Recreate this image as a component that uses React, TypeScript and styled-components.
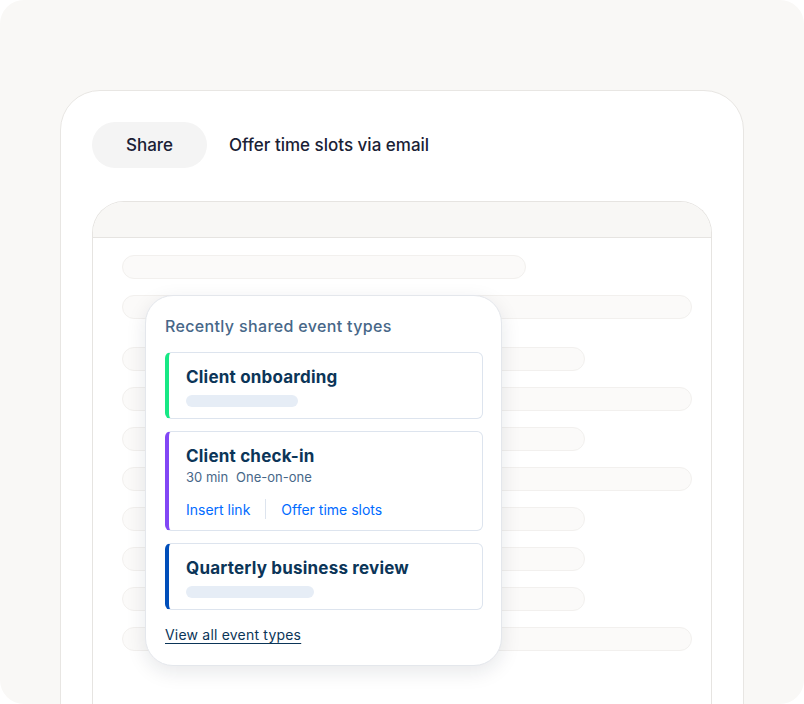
import React from "react";
import styled, { createGlobalStyle } from "styled-components";

const GlobalStyle = createGlobalStyle`
  html, body {
    margin: 0;
    padding: 0;
    background: #ffffff;
  }
  * {
    box-sizing: border-box;
  }
`;

const Page = styled.div`
  width: 804px;
  height: 704px;
  overflow: hidden;
  background: #f9f8f6;
  border-radius: 24px;
  padding: 90px 60px 0;
  font-family: Inter, "Noto Sans", sans-serif;
`;

const Card = styled.div`
  height: 640px;
  background: #ffffff;
  border: 1px solid #e8e6e3;
  border-radius: 40px 40px 0 0;
  padding: 31px 31px 0;
`;

const TopBar = styled.div`
  display: flex;
  align-items: center;
  gap: 22px;
  height: 46px;
`;

const SharePill = styled.div`
  width: 115px;
  height: 46px;
  border-radius: 23px;
  background: #f4f4f4;
  display: flex;
  align-items: center;
  justify-content: center;
  font-size: 17px;
  font-weight: 500;
  color: #1a2135;
`;

const TopLabel = styled.div`
  font-size: 17px;
  font-weight: 500;
  color: #1a2135;
`;

const Panel = styled.div`
  position: relative;
  margin-top: 33px;
  height: 520px;
  border: 1px solid #e6e4e1;
  border-bottom: none;
  border-radius: 32px 32px 0 0;
  overflow: hidden;
`;

const PanelHeader = styled.div`
  height: 36px;
  background: #f8f7f5;
  border-bottom: 1px solid #e6e4e1;
`;

const PanelBody = styled.div`
  padding: 17px 19px 0 29px;
  display: flex;
  flex-direction: column;
`;

const Skeleton = styled.div<{ $width: number; $gap: number }>`
  width: ${p => p.$width}px;
  height: 24px;
  margin-top: ${p => p.$gap}px;
  border-radius: 12px;
  background: #fbfaf9;
  border: 1px solid #f2f0ee;
`;

const Popup = styled.div`
  position: absolute;
  left: 52px;
  top: 93px;
  width: 357px;
  height: 371px;
  background: #ffffff;
  border: 1px solid #e4e7ec;
  border-radius: 28px;
  box-shadow: 0 6px 20px rgba(20, 30, 50, 0.1);
  padding: 20px 18px 0 19px;
  font-family: Inter, "Noto Sans", sans-serif;
`;

const PopupTitle = styled.div`
  font-size: 16px;
  line-height: 20px;
  font-weight: 500;
  letter-spacing: 0.35px;
  color: #476788;
`;

const EventList = styled.div`
  margin-top: 16px;
  display: flex;
  flex-direction: column;
  gap: 12px;
`;

const EventItem = styled.div<{ $accent: string }>`
  border: 1px solid #dde4ee;
  border-left: 4px solid ${p => p.$accent};
  border-radius: 6px;
  padding: 13px 16px 11px 17px;
`;

const EventName = styled.div`
  font-size: 17px;
  line-height: 22px;
  font-weight: 700;
  letter-spacing: 0.2px;
  color: #0b3558;
`;

const EventMeta = styled.div`
  margin-top: 1px;
  font-size: 13px;
  line-height: 18px;
  color: #476788;
  display: flex;
  gap: 8px;
`;

const TextPill = styled.div<{ $width: number }>`
  margin-top: 7px;
  width: ${p => p.$width}px;
  height: 12px;
  border-radius: 6px;
  background: #e6edf6;
`;

const Actions = styled.div`
  margin-top: 13px;
  display: flex;
  align-items: center;
  height: 20px;
`;

const ActionLink = styled.a`
  font-size: 14px;
  color: #006bff;
  text-decoration: none;
`;

const Divider = styled.span`
  width: 1px;
  height: 20px;
  background: #dde4ee;
  margin: 0 15px;
`;

const ViewAll = styled.a`
  display: inline-block;
  margin-top: 15px;
  font-size: 14px;
  line-height: 20px;
  letter-spacing: 0.2px;
  color: #0b3558;
  text-decoration: underline;
  text-underline-offset: 3px;
  text-decoration-thickness: 1px;
`;

const bars = [
  { width: 404, gap: 0 },
  { width: 570, gap: 16 },
  { width: 463, gap: 28 },
  { width: 570, gap: 16 },
  { width: 463, gap: 16 },
  { width: 570, gap: 16 },
  { width: 463, gap: 16 },
  { width: 463, gap: 16 },
  { width: 463, gap: 16 },
  { width: 570, gap: 16 },
];

export default function App() {
  return (
    <>
      <GlobalStyle />
      <Page>
        <Card>
          <TopBar>
            <SharePill>Share</SharePill>
            <TopLabel>Offer time slots via email</TopLabel>
          </TopBar>
          <Panel>
            <PanelHeader />
            <PanelBody>
              {bars.map((b, i) => (
                <Skeleton key={i} $width={b.width} $gap={b.gap} />
              ))}
            </PanelBody>
            <Popup>
              <PopupTitle>Recently shared event types</PopupTitle>
              <EventList>
                <EventItem $accent="#17e885">
                  <EventName>Client onboarding</EventName>
                  <TextPill $width={112} />
                </EventItem>
                <EventItem $accent="#8247f5">
                  <EventName>Client check-in</EventName>
                  <EventMeta>
                    <span>30 min</span>
                    <span>One-on-one</span>
                  </EventMeta>
                  <Actions>
                    <ActionLink>Insert link</ActionLink>
                    <Divider />
                    <ActionLink>Offer time slots</ActionLink>
                  </Actions>
                </EventItem>
                <EventItem $accent="#004eba">
                  <EventName>Quarterly business review</EventName>
                  <TextPill $width={128} />
                </EventItem>
              </EventList>
              <ViewAll>View all event types</ViewAll>
            </Popup>
          </Panel>
        </Card>
      </Page>
    </>
  );
}
